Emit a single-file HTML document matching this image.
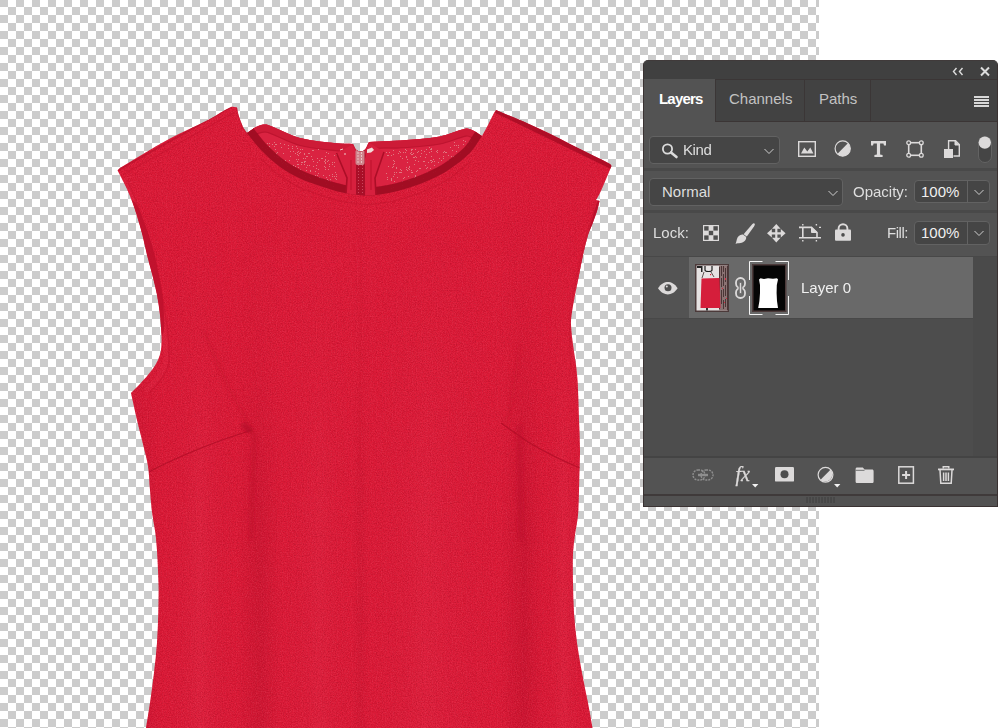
<!DOCTYPE html>
<html><head><meta charset="utf-8">
<style>
*{box-sizing:border-box;margin:0;padding:0}
html,body{width:1001px;height:728px;overflow:hidden;background:#fff}
body{position:relative;font-family:"Liberation Sans",sans-serif;font-size:15px;color:#dedede}
#canvas{position:absolute;left:0;top:0;width:819px;height:728px;
 background-color:#fff;
 background-image:conic-gradient(#ccc 25%,#fff 0 50%,#ccc 0 75%,#fff 0);
 background-size:16px 16px;background-position:8px -1px}
#dress{position:absolute;left:0;top:0}
#panel{position:absolute;left:643px;top:60px;width:355px;height:447px;background:#535353;
 border-radius:5px 5px 0 0;overflow:hidden;border:1px solid #3a3232;border-top-color:#403a3a}
#ov{position:absolute;left:0;top:0;width:1001px;height:728px}
#ov>*{position:absolute}
.bg{position:absolute}
.tab{border:1px solid #3b3636;border-bottom:none;background:#424242}
.box{background:#454545;border:1px solid #626262;border-radius:4px}
.t{white-space:nowrap;line-height:18px;height:18px}
.dim{color:#c2c2c2}
svg{overflow:visible}
</style></head><body>
<div id="canvas"></div>
<svg id="dress" width="819" height="728" viewBox="0 0 819 728">
<defs>
 <clipPath id="cs"><path d="M117.6,170.5 C118.4,169.7 119.0,168.6 120.0,168.0 C136.5,157.9 153.0,147.8 170.0,138.5 C183.0,131.4 196.8,125.8 210.0,119.0 C217.2,115.3 223.6,110.2 231.0,107.0 C232.8,106.2 235.0,107.3 237.0,107.4 C237.5,109.9 237.7,112.5 238.5,115.0 C239.8,119.1 241.2,123.1 243.0,127.0 C244.0,129.2 245.7,131.0 247.0,133.0 C250.0,131.0 252.8,128.7 256.0,127.0 C257.9,126.0 259.9,125.2 262.0,124.8 C264.0,124.5 266.1,124.3 268.0,125.0 C278.9,128.8 288.9,135.1 300.0,138.0 C312.7,141.3 326.0,142.1 339.0,143.6 C343.6,144.1 348.3,143.9 353.0,144.0 C354.3,146.2 354.8,149.2 357.0,150.5 C359.0,151.7 362.1,151.8 364.0,150.5 C366.7,148.6 367.3,144.8 369.0,142.0 C379.3,141.5 389.7,141.3 400.0,140.5 C413.4,139.5 426.8,138.9 440.0,136.5 C448.9,134.9 457.1,130.4 466.0,128.6 C468.0,128.2 470.1,129.1 472.0,130.0 C475.5,131.6 478.7,134.0 482.0,136.0 C484.0,132.3 486.1,128.7 488.0,125.0 C490.1,121.0 491.9,116.9 494.0,113.0 C494.6,111.9 495.3,111.0 496.0,110.0 C510.7,116.3 525.5,122.3 540.0,129.0 C553.5,135.3 566.7,142.3 580.0,149.0 C590.0,154.0 600.2,158.7 610.0,164.0 C610.7,164.4 611.0,165.3 611.5,166.0 C609.8,170.0 608.2,174.0 606.5,178.0 C604.2,183.4 602.0,188.7 599.5,194.0 C598.5,196.1 597.2,198.0 596.0,200.0 C597.2,200.3 598.3,200.7 599.5,201.0 C598.7,204.3 598.0,207.7 597.0,211.0 C595.5,215.7 593.7,220.4 592.0,225.0 C590.7,228.4 589.0,231.6 588.0,235.0 C586.0,241.6 584.5,248.3 583.0,255.0 C581.5,261.6 580.3,268.3 579.0,275.0 C577.7,281.7 576.3,288.3 575.0,295.0 C573.8,301.7 572.4,308.3 571.5,315.0 C571.1,318.3 570.8,321.7 571.0,325.0 C571.3,331.7 572.2,338.4 573.0,345.0 C573.8,351.7 575.1,358.3 576.0,365.0 C576.6,370.0 577.1,375.0 577.5,380.0 C577.8,383.3 577.9,386.7 578.0,390.0 C578.4,400.0 578.7,410.0 579.0,420.0 C579.3,430.0 579.9,440.0 580.0,450.0 C580.1,456.7 579.7,463.3 579.5,470.0 C579.3,476.7 579.2,483.3 579.0,490.0 C578.7,498.3 578.7,506.7 578.0,515.0 C577.4,521.7 575.9,528.3 575.0,535.0 C574.2,541.0 573.3,547.0 573.0,553.0 C572.6,563.0 572.8,573.0 573.0,583.0 C573.2,593.0 573.3,603.0 574.0,613.0 C574.7,623.0 575.7,633.0 577.0,643.0 C578.3,653.0 580.2,663.0 582.0,673.0 C583.8,683.0 586.1,693.0 588.0,703.0 C589.6,711.3 591.0,719.7 592.5,728.0 C443.7,728.0 294.8,728.0 146.0,728.0 C147.3,719.7 148.8,711.4 150.0,703.0 C151.5,693.0 152.8,683.0 154.0,673.0 C155.2,663.0 156.3,653.0 157.0,643.0 C157.7,633.0 158.0,623.0 158.3,613.0 C158.5,603.0 158.8,593.0 158.5,583.0 C158.0,568.0 157.4,553.0 156.0,538.0 C155.2,529.3 153.1,520.7 152.0,512.0 C151.1,504.7 150.6,497.3 150.0,490.0 C149.3,482.0 149.2,473.9 148.0,466.0 C146.9,458.6 144.7,451.3 143.0,444.0 C141.1,436.0 138.9,428.0 137.0,420.0 C135.6,414.0 134.3,408.0 133.0,402.0 C132.3,399.0 131.7,396.0 131.0,393.0 C134.0,390.0 137.1,387.1 140.0,384.0 C144.1,379.5 148.3,374.9 152.0,370.0 C154.3,366.9 156.4,363.5 158.0,360.0 C159.4,356.8 160.5,353.4 161.0,350.0 C161.7,345.0 161.6,340.0 161.5,335.0 C161.3,328.3 160.7,321.6 160.0,315.0 C159.2,308.3 158.3,301.6 157.0,295.0 C155.7,288.3 154.0,281.6 152.3,275.0 C150.6,268.3 148.7,261.7 147.0,255.0 C145.4,248.4 144.1,241.6 142.4,235.0 C140.8,228.6 138.9,222.3 137.0,216.0 C135.5,211.0 133.8,205.9 132.0,201.0 C130.5,196.9 128.8,192.9 127.0,189.0 C125.5,185.6 123.7,182.3 122.0,179.0 C120.6,176.2 119.1,173.3 117.6,170.5 Z"/></clipPath>
 <clipPath id="cc"><path d="M247.0,133.0 C250.0,131.0 252.8,128.7 256.0,127.0 C257.9,126.0 259.9,125.2 262.0,124.8 C264.0,124.5 266.1,124.3 268.0,125.0 C278.9,128.8 288.9,135.1 300.0,138.0 C312.7,141.3 326.0,142.1 339.0,143.6 C343.6,144.1 348.3,143.9 353.0,144.0 C354.3,146.2 354.8,149.2 357.0,150.5 C359.0,151.7 362.1,151.8 364.0,150.5 C366.7,148.6 367.3,144.8 369.0,142.0 C379.3,141.5 389.7,141.3 400.0,140.5 C413.4,139.5 426.8,138.9 440.0,136.5 C448.9,134.9 457.1,130.4 466.0,128.6 C468.0,128.2 470.1,129.1 472.0,130.0 C475.5,131.6 478.7,134.0 482.0,136.0 C478.0,141.7 474.8,148.0 470.0,153.0 C464.1,159.1 456.9,164.0 450.0,169.0 C446.9,171.3 443.5,173.3 440.0,175.0 C433.5,178.3 426.8,181.4 420.0,184.0 C412.8,186.7 405.4,189.0 398.0,191.0 C392.1,192.6 386.1,193.7 380.0,194.5 C375.0,195.2 370.0,195.8 365.0,195.5 C357.3,195.1 349.6,194.1 342.0,192.5 C334.5,190.9 327.3,188.4 320.0,186.0 C313.2,183.7 306.4,181.6 300.0,178.5 C293.1,175.2 286.2,171.6 280.0,167.0 C272.8,161.7 266.2,155.4 260.0,149.0 C255.2,144.1 251.3,138.3 247.0,133.0 Z"/></clipPath>
 <linearGradient id="folds" gradientUnits="userSpaceOnUse" x1="140" x2="600" y1="0" y2="0">
  <stop offset="0" stop-color="#b80f2a" stop-opacity=".35"/>
  <stop offset=".05" stop-color="#b80f2a" stop-opacity="0"/>
  <stop offset=".13" stop-color="#f04a66" stop-opacity=".16"/>
  <stop offset=".21" stop-color="#b80f2a" stop-opacity="0"/>
  <stop offset=".26" stop-color="#b80f2a" stop-opacity=".38"/>
  <stop offset=".31" stop-color="#b80f2a" stop-opacity="0"/>
  <stop offset=".39" stop-color="#f04a66" stop-opacity=".12"/>
  <stop offset=".46" stop-color="#b80f2a" stop-opacity="0"/>
  <stop offset=".478" stop-color="#b80f2a" stop-opacity=".22"/>
  <stop offset=".5" stop-color="#b80f2a" stop-opacity="0"/>
  <stop offset=".62" stop-color="#f04a66" stop-opacity=".12"/>
  <stop offset=".78" stop-color="#b80f2a" stop-opacity="0"/>
  <stop offset=".835" stop-color="#b80f2a" stop-opacity=".42"/>
  <stop offset=".88" stop-color="#b80f2a" stop-opacity="0"/>
  <stop offset=".92" stop-color="#f04a66" stop-opacity=".16"/>
  <stop offset=".97" stop-color="#b80f2a" stop-opacity="0"/>
  <stop offset="1" stop-color="#b80f2a" stop-opacity=".3"/>
 </linearGradient>
 <linearGradient id="vfade" x1="0" x2="0" y1="0" y2="1">
  <stop offset="0" stop-color="#000"/><stop offset=".3" stop-color="#444"/><stop offset=".62" stop-color="#fff"/><stop offset="1" stop-color="#fff"/>
 </linearGradient>
 <mask id="mf" maskUnits="userSpaceOnUse" x="100" y="200" width="560" height="528"><rect x="100" y="200" width="560" height="528" fill="url(#vfade)"/></mask>
 <filter id="grain" filterUnits="userSpaceOnUse" x="100" y="100" width="530" height="628" color-interpolation-filters="sRGB">
  <feTurbulence type="fractalNoise" baseFrequency="0.85" numOctaves="2" seed="5" result="n"/>
  <feColorMatrix in="n" type="matrix" values="0 0 0 0 0.62  0 0 0 0 0.03  0 0 0 0 0.12  0 0 0 1.6 -0.62"/>
 </filter>
 <filter id="grain2" filterUnits="userSpaceOnUse" x="100" y="100" width="530" height="628" color-interpolation-filters="sRGB">
  <feTurbulence type="fractalNoise" baseFrequency="0.8" numOctaves="2" seed="23" result="n"/>
  <feColorMatrix in="n" type="matrix" values="0 0 0 0 0.95  0 0 0 0 0.35  0 0 0 0 0.45  0 0 0 1.4 -0.6"/>
 </filter>
 <filter id="bl2" filterUnits="userSpaceOnUse" x="0" y="0" width="819" height="728"><feGaussianBlur stdDeviation="1.6"/></filter>
 <filter id="bl1" filterUnits="userSpaceOnUse" x="0" y="0" width="819" height="728"><feGaussianBlur stdDeviation="0.7"/></filter>
 <filter id="bl3" filterUnits="userSpaceOnUse" x="0" y="0" width="819" height="728"><feGaussianBlur stdDeviation="3"/></filter>
</defs>
<path d="M117.6,170.5 C118.4,169.7 119.0,168.6 120.0,168.0 C136.5,157.9 153.0,147.8 170.0,138.5 C183.0,131.4 196.8,125.8 210.0,119.0 C217.2,115.3 223.6,110.2 231.0,107.0 C232.8,106.2 235.0,107.3 237.0,107.4 C237.5,109.9 237.7,112.5 238.5,115.0 C239.8,119.1 241.2,123.1 243.0,127.0 C244.0,129.2 245.7,131.0 247.0,133.0 C250.0,131.0 252.8,128.7 256.0,127.0 C257.9,126.0 259.9,125.2 262.0,124.8 C264.0,124.5 266.1,124.3 268.0,125.0 C278.9,128.8 288.9,135.1 300.0,138.0 C312.7,141.3 326.0,142.1 339.0,143.6 C343.6,144.1 348.3,143.9 353.0,144.0 C354.3,146.2 354.8,149.2 357.0,150.5 C359.0,151.7 362.1,151.8 364.0,150.5 C366.7,148.6 367.3,144.8 369.0,142.0 C379.3,141.5 389.7,141.3 400.0,140.5 C413.4,139.5 426.8,138.9 440.0,136.5 C448.9,134.9 457.1,130.4 466.0,128.6 C468.0,128.2 470.1,129.1 472.0,130.0 C475.5,131.6 478.7,134.0 482.0,136.0 C484.0,132.3 486.1,128.7 488.0,125.0 C490.1,121.0 491.9,116.9 494.0,113.0 C494.6,111.9 495.3,111.0 496.0,110.0 C510.7,116.3 525.5,122.3 540.0,129.0 C553.5,135.3 566.7,142.3 580.0,149.0 C590.0,154.0 600.2,158.7 610.0,164.0 C610.7,164.4 611.0,165.3 611.5,166.0 C609.8,170.0 608.2,174.0 606.5,178.0 C604.2,183.4 602.0,188.7 599.5,194.0 C598.5,196.1 597.2,198.0 596.0,200.0 C597.2,200.3 598.3,200.7 599.5,201.0 C598.7,204.3 598.0,207.7 597.0,211.0 C595.5,215.7 593.7,220.4 592.0,225.0 C590.7,228.4 589.0,231.6 588.0,235.0 C586.0,241.6 584.5,248.3 583.0,255.0 C581.5,261.6 580.3,268.3 579.0,275.0 C577.7,281.7 576.3,288.3 575.0,295.0 C573.8,301.7 572.4,308.3 571.5,315.0 C571.1,318.3 570.8,321.7 571.0,325.0 C571.3,331.7 572.2,338.4 573.0,345.0 C573.8,351.7 575.1,358.3 576.0,365.0 C576.6,370.0 577.1,375.0 577.5,380.0 C577.8,383.3 577.9,386.7 578.0,390.0 C578.4,400.0 578.7,410.0 579.0,420.0 C579.3,430.0 579.9,440.0 580.0,450.0 C580.1,456.7 579.7,463.3 579.5,470.0 C579.3,476.7 579.2,483.3 579.0,490.0 C578.7,498.3 578.7,506.7 578.0,515.0 C577.4,521.7 575.9,528.3 575.0,535.0 C574.2,541.0 573.3,547.0 573.0,553.0 C572.6,563.0 572.8,573.0 573.0,583.0 C573.2,593.0 573.3,603.0 574.0,613.0 C574.7,623.0 575.7,633.0 577.0,643.0 C578.3,653.0 580.2,663.0 582.0,673.0 C583.8,683.0 586.1,693.0 588.0,703.0 C589.6,711.3 591.0,719.7 592.5,728.0 C443.7,728.0 294.8,728.0 146.0,728.0 C147.3,719.7 148.8,711.4 150.0,703.0 C151.5,693.0 152.8,683.0 154.0,673.0 C155.2,663.0 156.3,653.0 157.0,643.0 C157.7,633.0 158.0,623.0 158.3,613.0 C158.5,603.0 158.8,593.0 158.5,583.0 C158.0,568.0 157.4,553.0 156.0,538.0 C155.2,529.3 153.1,520.7 152.0,512.0 C151.1,504.7 150.6,497.3 150.0,490.0 C149.3,482.0 149.2,473.9 148.0,466.0 C146.9,458.6 144.7,451.3 143.0,444.0 C141.1,436.0 138.9,428.0 137.0,420.0 C135.6,414.0 134.3,408.0 133.0,402.0 C132.3,399.0 131.7,396.0 131.0,393.0 C134.0,390.0 137.1,387.1 140.0,384.0 C144.1,379.5 148.3,374.9 152.0,370.0 C154.3,366.9 156.4,363.5 158.0,360.0 C159.4,356.8 160.5,353.4 161.0,350.0 C161.7,345.0 161.6,340.0 161.5,335.0 C161.3,328.3 160.7,321.6 160.0,315.0 C159.2,308.3 158.3,301.6 157.0,295.0 C155.7,288.3 154.0,281.6 152.3,275.0 C150.6,268.3 148.7,261.7 147.0,255.0 C145.4,248.4 144.1,241.6 142.4,235.0 C140.8,228.6 138.9,222.3 137.0,216.0 C135.5,211.0 133.8,205.9 132.0,201.0 C130.5,196.9 128.8,192.9 127.0,189.0 C125.5,185.6 123.7,182.3 122.0,179.0 C120.6,176.2 119.1,173.3 117.6,170.5 Z" fill="#dd1b38"/>
<g clip-path="url(#cs)">
 <g mask="url(#mf)"><rect x="100" y="200" width="560" height="528" fill="url(#folds)" transform="skewX(0)"/></g>
 <rect x="100" y="100" width="530" height="628" filter="url(#grain)" opacity=".55"/>
 <rect x="100" y="100" width="530" height="628" filter="url(#grain2)" opacity=".45"/>
 <!-- armhole binding lighter strips -->
 <path d="M124,178 C138,208 150,245 158,285 C163,312 167,340 166,360 C165,370 157,380 146,391" fill="none" stroke="#e5324f" stroke-width="5" opacity=".22"/>
 <path d="M599,198 C591,225 583,258 578,290 C574,315 573,340 575,362" fill="none" stroke="#e5324f" stroke-width="4" opacity=".18"/>
 <!-- centre seam upper -->
 <path d="M361,200 L359.5,470" stroke="#c3132e" stroke-width="1.2" opacity=".14" fill="none"/>
 <!-- darts -->
 <g fill="none" stroke="#b30e28" stroke-width="1.3" opacity=".85" filter="url(#bl1)">
  <path d="M149,472 C165,463 205,445 240,434 L252,430"/>
  <path d="M501,423 L528,442 C545,452 565,462 580,468"/>
 </g>
 <g fill="none" stroke="#bd112c" opacity=".5" filter="url(#bl2)">
  <path d="M203,330 C220,370 240,410 254,433" stroke-width="3" opacity=".55"/>
  <path d="M519,345 C516,380 512,410 504,424" stroke-width="3" opacity=".5"/>
  <path d="M254,433 C254,470 252,500 251,540" stroke-width="5" opacity=".8"/>
  <path d="M519,425 C520,460 520,500 521,540" stroke-width="6" opacity=".9"/>
 </g>
 <ellipse cx="247" cy="428" rx="7" ry="3.5" fill="#b50f29" opacity=".75" filter="url(#bl2)" transform="rotate(38 247 428)"/>
 <!-- armhole inner (back) -->
 <path d="M131.0,199.0 C133.0,204.7 135.2,210.3 137.0,216.0 C139.0,222.3 140.8,228.6 142.4,235.0 C144.1,241.6 145.4,248.4 147.0,255.0 C148.7,261.7 150.6,268.3 152.3,275.0 C154.0,281.6 155.7,288.3 157.0,295.0 C158.3,301.6 159.2,308.3 160.0,315.0 C160.7,321.6 159.8,328.5 161.5,335.0 C162.0,336.8 163.9,331.9 164.0,330.0 C164.4,320.0 164.0,310.0 163.0,300.0 C162.0,289.9 160.0,279.9 158.0,270.0 C156.3,261.6 154.4,253.2 152.0,245.0 C149.7,237.2 146.9,229.6 144.0,222.0 C141.8,216.3 140.0,210.3 137.0,205.0 C135.6,202.5 133.0,201.0 131.0,199.0 Z" fill="#bd112c" opacity=".85"/>
 <path d="M127,180 C140,208 152,245 160,285 C165,312 170,340 169,362 C168,372 160,382 150,392" fill="none" stroke="#c3132e" stroke-width="1.2" opacity=".55"/>
 <path d="M600,200 C596,212 589,236 583,262 C579,285 575,305 574.5,322" fill="none" stroke="#b30e28" stroke-width="4" opacity=".8"/>
 <path d="M574.5,322 C575,340 578,360 580,385 L582,470 L579,540" fill="none" stroke="#c3132e" stroke-width="3" opacity=".45"/>
 <path d="M594,210 C586,235 578,265 573,295 C569,320 569,345 571,370" fill="none" stroke="#c3132e" stroke-width="1.2" opacity=".4"/>
 <!-- shoulder edges -->
 <path d="M123,174.5 L234,112.5" stroke="#c3132e" stroke-width="1.2" opacity=".55" fill="none"/>
 <path d="M117.6,170.5 L231,107" stroke="#b30e28" stroke-width="2" opacity=".55" fill="none"/>
 <path d="M496,110.5 L611.5,166.5" stroke="#a50b23" stroke-width="5" opacity=".8" fill="none"/>
 <path d="M237,107.4 C238,117 243,127 248,134" stroke="#b30e28" stroke-width="1.5" opacity=".5" fill="none"/>
</g>
<!-- collar interior -->
<path d="M247.0,133.0 C250.0,131.0 252.8,128.7 256.0,127.0 C257.9,126.0 259.9,125.2 262.0,124.8 C264.0,124.5 266.1,124.3 268.0,125.0 C278.9,128.8 288.9,135.1 300.0,138.0 C312.7,141.3 326.0,142.1 339.0,143.6 C343.6,144.1 348.3,143.9 353.0,144.0 C354.3,146.2 354.8,149.2 357.0,150.5 C359.0,151.7 362.1,151.8 364.0,150.5 C366.7,148.6 367.3,144.8 369.0,142.0 C379.3,141.5 389.7,141.3 400.0,140.5 C413.4,139.5 426.8,138.9 440.0,136.5 C448.9,134.9 457.1,130.4 466.0,128.6 C468.0,128.2 470.1,129.1 472.0,130.0 C475.5,131.6 478.7,134.0 482.0,136.0 C478.0,141.7 474.8,148.0 470.0,153.0 C464.1,159.1 456.9,164.0 450.0,169.0 C446.9,171.3 443.5,173.3 440.0,175.0 C433.5,178.3 426.8,181.4 420.0,184.0 C412.8,186.7 405.4,189.0 398.0,191.0 C392.1,192.6 386.1,193.7 380.0,194.5 C375.0,195.2 370.0,195.8 365.0,195.5 C357.3,195.1 349.6,194.1 342.0,192.5 C334.5,190.9 327.3,188.4 320.0,186.0 C313.2,183.7 306.4,181.6 300.0,178.5 C293.1,175.2 286.2,171.6 280.0,167.0 C272.8,161.7 266.2,155.4 260.0,149.0 C255.2,144.1 251.3,138.3 247.0,133.0 Z" fill="#da2341"/>
<g clip-path="url(#cc)">
 <path d="M247.0,133.0 C250.0,131.0 252.8,128.7 256.0,127.0 C257.9,126.0 259.9,125.2 262.0,124.8 C264.0,124.5 266.1,124.3 268.0,125.0 C278.9,128.8 288.9,135.1 300.0,138.0 C312.7,141.3 326.0,142.1 339.0,143.6 C343.6,144.1 348.6,142.3 353.0,144.0 C355.4,144.9 354.8,149.2 357.0,150.5 C359.0,151.7 362.1,151.8 364.0,150.5 C366.7,148.6 365.8,142.9 369.0,142.0 C379.0,139.2 389.7,141.3 400.0,140.5 C413.4,139.5 426.8,138.9 440.0,136.5 C448.9,134.9 457.1,130.4 466.0,128.6 C468.0,128.2 470.1,129.1 472.0,130.0 C475.5,131.6 478.7,134.0 482.0,136.0" fill="none" stroke="#c41530" stroke-width="15" opacity=".6"/>
 <path d="M247.0,140.5 C250.0,138.5 252.8,136.2 256.0,134.5 C257.9,133.5 259.9,132.7 262.0,132.3 C264.0,132.0 266.1,131.8 268.0,132.5 C278.9,136.3 288.9,142.6 300.0,145.5 C312.7,148.8 326.0,149.6 339.0,151.1 C343.6,151.6 348.6,149.8 353.0,151.5 C355.4,152.4 354.8,156.7 357.0,158.0 C359.0,159.2 362.1,159.3 364.0,158.0 C366.7,156.1 365.8,150.4 369.0,149.5 C379.0,146.7 389.7,148.8 400.0,148.0 C413.4,147.0 426.8,146.4 440.0,144.0 C448.9,142.4 457.1,137.9 466.0,136.1 C468.0,135.7 470.1,136.6 472.0,137.5 C475.5,139.1 478.7,141.5 482.0,143.5" fill="none" stroke="#b20f29" stroke-width="1.2" opacity=".6"/>
 <g fill="#e3a3a0" opacity=".65"><rect x="298" y="167" width="1" height="1"/><rect x="394" y="181" width="1" height="1"/><rect x="278" y="156" width="1" height="1"/><rect x="399" y="172" width="1" height="1"/><rect x="299" y="153" width="1" height="1"/><rect x="326" y="152" width="1" height="1"/><rect x="424" y="161" width="1" height="1"/><rect x="441" y="160" width="1" height="1"/><rect x="426" y="154" width="1" height="1"/><rect x="277" y="157" width="1" height="1"/><rect x="283" y="153" width="1" height="1"/><rect x="280" y="143" width="1" height="1"/><rect x="430" y="149" width="1" height="1"/><rect x="283" y="162" width="1" height="1"/><rect x="304" y="154" width="1" height="1"/><rect x="304" y="161" width="1" height="1"/><rect x="304" y="153" width="1" height="1"/><rect x="425" y="157" width="1" height="1"/><rect x="310" y="171" width="1" height="1"/><rect x="297" y="148" width="1" height="1"/><rect x="312" y="150" width="1" height="1"/><rect x="309" y="177" width="1" height="1"/><rect x="387" y="155" width="1" height="1"/><rect x="273" y="152" width="1" height="1"/><rect x="391" y="155" width="1" height="1"/><rect x="456" y="151" width="1" height="1"/><rect x="296" y="159" width="1" height="1"/><rect x="407" y="170" width="1" height="1"/><rect x="417" y="177" width="1" height="1"/><rect x="334" y="176" width="1" height="1"/><rect x="393" y="160" width="1" height="1"/><rect x="415" y="160" width="1" height="1"/><rect x="417" y="170" width="1" height="1"/><rect x="409" y="166" width="1" height="1"/><rect x="391" y="188" width="1" height="1"/><rect x="323" y="175" width="1" height="1"/><rect x="302" y="149" width="1" height="1"/><rect x="329" y="175" width="1" height="1"/><rect x="301" y="162" width="1" height="1"/><rect x="448" y="160" width="1" height="1"/><rect x="287" y="166" width="1" height="1"/><rect x="318" y="149" width="1" height="1"/><rect x="304" y="162" width="1" height="1"/><rect x="393" y="166" width="1" height="1"/><rect x="326" y="184" width="1" height="1"/><rect x="274" y="142" width="1" height="1"/><rect x="411" y="170" width="1" height="1"/><rect x="325" y="181" width="1" height="1"/><rect x="262" y="147" width="1" height="1"/><rect x="437" y="152" width="1" height="1"/><rect x="394" y="163" width="1" height="1"/><rect x="394" y="174" width="1" height="1"/><rect x="406" y="150" width="1" height="1"/><rect x="412" y="149" width="1" height="1"/><rect x="317" y="158" width="1" height="1"/><rect x="409" y="167" width="1" height="1"/><rect x="391" y="179" width="1" height="1"/><rect x="454" y="145" width="1" height="1"/><rect x="286" y="164" width="1" height="1"/><rect x="393" y="187" width="1" height="1"/><rect x="399" y="151" width="1" height="1"/><rect x="397" y="177" width="1" height="1"/><rect x="443" y="158" width="1" height="1"/><rect x="431" y="149" width="1" height="1"/><rect x="330" y="181" width="1" height="1"/><rect x="288" y="148" width="1" height="1"/><rect x="463" y="144" width="1" height="1"/><rect x="306" y="167" width="1" height="1"/><rect x="321" y="178" width="1" height="1"/><rect x="396" y="167" width="1" height="1"/><rect x="325" y="160" width="1" height="1"/><rect x="316" y="165" width="1" height="1"/><rect x="285" y="163" width="1" height="1"/><rect x="299" y="172" width="1" height="1"/><rect x="458" y="147" width="1" height="1"/><rect x="300" y="152" width="1" height="1"/><rect x="406" y="157" width="1" height="1"/><rect x="335" y="172" width="1" height="1"/><rect x="312" y="150" width="1" height="1"/><rect x="302" y="173" width="1" height="1"/><rect x="396" y="168" width="1" height="1"/><rect x="443" y="152" width="1" height="1"/><rect x="453" y="156" width="1" height="1"/><rect x="450" y="147" width="1" height="1"/><rect x="310" y="178" width="1" height="1"/><rect x="438" y="162" width="1" height="1"/><rect x="429" y="147" width="1" height="1"/><rect x="467" y="146" width="1" height="1"/><rect x="298" y="151" width="1" height="1"/><rect x="458" y="145" width="1" height="1"/><rect x="329" y="164" width="1" height="1"/><rect x="297" y="164" width="1" height="1"/><rect x="418" y="161" width="1" height="1"/><rect x="300" y="149" width="1" height="1"/><rect x="394" y="161" width="1" height="1"/><rect x="388" y="166" width="1" height="1"/><rect x="434" y="161" width="1" height="1"/><rect x="408" y="180" width="1" height="1"/><rect x="423" y="161" width="1" height="1"/><rect x="332" y="164" width="1" height="1"/><rect x="396" y="172" width="1" height="1"/><rect x="402" y="158" width="1" height="1"/><rect x="401" y="170" width="1" height="1"/><rect x="409" y="180" width="1" height="1"/><rect x="470" y="141" width="1" height="1"/><rect x="391" y="178" width="1" height="1"/><rect x="313" y="161" width="1" height="1"/><rect x="269" y="150" width="1" height="1"/><rect x="387" y="179" width="1" height="1"/><rect x="293" y="165" width="1" height="1"/><rect x="295" y="166" width="1" height="1"/><rect x="400" y="169" width="1" height="1"/><rect x="319" y="177" width="1" height="1"/><rect x="414" y="164" width="1" height="1"/><rect x="393" y="164" width="1" height="1"/><rect x="426" y="168" width="1" height="1"/><rect x="417" y="152" width="1" height="1"/><rect x="427" y="172" width="1" height="1"/><rect x="336" y="154" width="1" height="1"/><rect x="406" y="169" width="1" height="1"/><rect x="386" y="173" width="1" height="1"/><rect x="421" y="150" width="1" height="1"/><rect x="267" y="143" width="1" height="1"/><rect x="317" y="162" width="1" height="1"/><rect x="303" y="158" width="1" height="1"/><rect x="274" y="146" width="1" height="1"/><rect x="433" y="172" width="1" height="1"/><rect x="424" y="151" width="1" height="1"/><rect x="433" y="159" width="1" height="1"/><rect x="328" y="169" width="1" height="1"/><rect x="275" y="144" width="1" height="1"/><rect x="406" y="156" width="1" height="1"/><rect x="304" y="174" width="1" height="1"/><rect x="276" y="156" width="1" height="1"/><rect x="415" y="176" width="1" height="1"/><rect x="335" y="178" width="1" height="1"/><rect x="411" y="170" width="1" height="1"/><rect x="431" y="156" width="1" height="1"/><rect x="327" y="161" width="1" height="1"/><rect x="312" y="159" width="1" height="1"/><rect x="300" y="169" width="1" height="1"/><rect x="430" y="168" width="1" height="1"/><rect x="439" y="169" width="1" height="1"/><rect x="448" y="155" width="1" height="1"/><rect x="276" y="144" width="1" height="1"/><rect x="398" y="153" width="1" height="1"/><rect x="414" y="177" width="1" height="1"/><rect x="431" y="162" width="1" height="1"/><rect x="302" y="162" width="1" height="1"/><rect x="426" y="149" width="1" height="1"/><rect x="266" y="146" width="1" height="1"/><rect x="298" y="151" width="1" height="1"/><rect x="309" y="177" width="1" height="1"/><rect x="386" y="152" width="1" height="1"/><rect x="298" y="155" width="1" height="1"/><rect x="325" y="169" width="1" height="1"/><rect x="434" y="165" width="1" height="1"/><rect x="431" y="160" width="1" height="1"/><rect x="400" y="152" width="1" height="1"/><rect x="412" y="172" width="1" height="1"/><rect x="292" y="148" width="1" height="1"/><rect x="328" y="153" width="1" height="1"/><rect x="316" y="168" width="1" height="1"/><rect x="276" y="154" width="1" height="1"/><rect x="443" y="156" width="1" height="1"/><rect x="428" y="162" width="1" height="1"/><rect x="456" y="145" width="1" height="1"/><rect x="436" y="151" width="1" height="1"/><rect x="325" y="156" width="1" height="1"/><rect x="274" y="156" width="1" height="1"/><rect x="336" y="176" width="1" height="1"/><rect x="281" y="161" width="1" height="1"/><rect x="411" y="152" width="1" height="1"/><rect x="431" y="151" width="1" height="1"/><rect x="391" y="155" width="1" height="1"/><rect x="322" y="158" width="1" height="1"/><rect x="313" y="150" width="1" height="1"/><rect x="416" y="157" width="1" height="1"/><rect x="414" y="157" width="1" height="1"/><rect x="288" y="145" width="1" height="1"/><rect x="404" y="177" width="1" height="1"/><rect x="297" y="161" width="1" height="1"/><rect x="277" y="152" width="1" height="1"/><rect x="292" y="146" width="1" height="1"/><rect x="401" y="172" width="1" height="1"/><rect x="332" y="174" width="1" height="1"/><rect x="281" y="160" width="1" height="1"/><rect x="334" y="166" width="1" height="1"/><rect x="393" y="150" width="1" height="1"/><rect x="276" y="153" width="1" height="1"/><rect x="435" y="171" width="1" height="1"/><rect x="310" y="170" width="1" height="1"/><rect x="437" y="150" width="1" height="1"/><rect x="265" y="149" width="1" height="1"/><rect x="400" y="156" width="1" height="1"/><rect x="403" y="178" width="1" height="1"/><rect x="301" y="164" width="1" height="1"/><rect x="289" y="160" width="1" height="1"/><rect x="393" y="176" width="1" height="1"/><rect x="416" y="171" width="1" height="1"/><rect x="420" y="156" width="1" height="1"/><rect x="285" y="163" width="1" height="1"/><rect x="324" y="161" width="1" height="1"/><rect x="402" y="185" width="1" height="1"/><rect x="463" y="140" width="1" height="1"/><rect x="311" y="156" width="1" height="1"/><rect x="324" y="166" width="1" height="1"/><rect x="452" y="150" width="1" height="1"/><rect x="439" y="158" width="1" height="1"/><rect x="302" y="173" width="1" height="1"/><rect x="269" y="146" width="1" height="1"/><rect x="415" y="156" width="1" height="1"/><rect x="306" y="156" width="1" height="1"/><rect x="411" y="150" width="1" height="1"/><rect x="297" y="152" width="1" height="1"/><rect x="402" y="181" width="1" height="1"/><rect x="307" y="156" width="1" height="1"/><rect x="318" y="173" width="1" height="1"/><rect x="388" y="155" width="1" height="1"/><rect x="277" y="155" width="1" height="1"/><rect x="421" y="153" width="1" height="1"/><rect x="318" y="169" width="1" height="1"/><rect x="471" y="142" width="1" height="1"/><rect x="336" y="174" width="1" height="1"/><rect x="427" y="167" width="1" height="1"/><rect x="406" y="167" width="1" height="1"/><rect x="464" y="149" width="1" height="1"/><rect x="426" y="149" width="1" height="1"/><rect x="389" y="152" width="1" height="1"/><rect x="309" y="165" width="1" height="1"/><rect x="306" y="170" width="1" height="1"/><rect x="387" y="177" width="1" height="1"/><rect x="297" y="148" width="1" height="1"/><rect x="429" y="152" width="1" height="1"/><rect x="290" y="156" width="1" height="1"/><rect x="392" y="167" width="1" height="1"/><rect x="315" y="171" width="1" height="1"/><rect x="295" y="153" width="1" height="1"/><rect x="468" y="142" width="1" height="1"/><rect x="450" y="147" width="1" height="1"/><rect x="308" y="153" width="1" height="1"/><rect x="332" y="176" width="1" height="1"/><rect x="305" y="158" width="1" height="1"/><rect x="298" y="169" width="1" height="1"/><rect x="293" y="151" width="1" height="1"/><rect x="304" y="164" width="1" height="1"/><rect x="325" y="163" width="1" height="1"/><rect x="444" y="151" width="1" height="1"/><rect x="407" y="159" width="1" height="1"/><rect x="297" y="154" width="1" height="1"/><rect x="412" y="154" width="1" height="1"/><rect x="423" y="178" width="1" height="1"/><rect x="328" y="160" width="1" height="1"/><rect x="328" y="180" width="1" height="1"/><rect x="267" y="148" width="1" height="1"/><rect x="325" y="162" width="1" height="1"/><rect x="411" y="154" width="1" height="1"/><rect x="415" y="175" width="1" height="1"/><rect x="290" y="151" width="1" height="1"/><rect x="319" y="177" width="1" height="1"/><rect x="445" y="152" width="1" height="1"/><rect x="321" y="158" width="1" height="1"/><rect x="305" y="176" width="1" height="1"/><rect x="446" y="152" width="1" height="1"/><rect x="329" y="166" width="1" height="1"/><rect x="332" y="162" width="1" height="1"/><rect x="409" y="169" width="1" height="1"/><rect x="328" y="153" width="1" height="1"/><rect x="315" y="175" width="1" height="1"/><rect x="298" y="164" width="1" height="1"/><rect x="394" y="172" width="1" height="1"/><rect x="448" y="160" width="1" height="1"/><rect x="454" y="142" width="1" height="1"/><rect x="287" y="166" width="1" height="1"/><rect x="325" y="159" width="1" height="1"/><rect x="300" y="152" width="1" height="1"/><rect x="405" y="152" width="1" height="1"/><rect x="333" y="186" width="1" height="1"/><rect x="326" y="177" width="1" height="1"/><rect x="408" y="176" width="1" height="1"/><rect x="420" y="168" width="1" height="1"/><rect x="309" y="153" width="1" height="1"/><rect x="272" y="144" width="1" height="1"/><rect x="282" y="163" width="1" height="1"/><rect x="425" y="165" width="1" height="1"/><rect x="313" y="166" width="1" height="1"/><rect x="430" y="160" width="1" height="1"/><rect x="413" y="153" width="1" height="1"/><rect x="413" y="157" width="1" height="1"/><rect x="330" y="179" width="1" height="1"/><rect x="411" y="172" width="1" height="1"/><rect x="285" y="160" width="1" height="1"/><rect x="403" y="152" width="1" height="1"/><rect x="468" y="147" width="1" height="1"/><rect x="407" y="162" width="1" height="1"/><rect x="394" y="161" width="1" height="1"/><rect x="320" y="178" width="1" height="1"/><rect x="319" y="160" width="1" height="1"/><rect x="391" y="180" width="1" height="1"/><rect x="408" y="168" width="1" height="1"/><rect x="431" y="148" width="1" height="1"/><rect x="296" y="146" width="1" height="1"/><rect x="460" y="153" width="1" height="1"/><rect x="393" y="154" width="1" height="1"/><rect x="307" y="165" width="1" height="1"/><rect x="269" y="143" width="1" height="1"/><rect x="451" y="156" width="1" height="1"/><rect x="275" y="149" width="1" height="1"/><rect x="432" y="161" width="1" height="1"/><rect x="400" y="172" width="1" height="1"/><rect x="415" y="149" width="1" height="1"/><rect x="284" y="144" width="1" height="1"/><rect x="336" y="179" width="1" height="1"/><rect x="325" y="167" width="1" height="1"/><rect x="465" y="141" width="1" height="1"/><rect x="410" y="153" width="1" height="1"/><rect x="400" y="182" width="1" height="1"/><rect x="334" y="155" width="1" height="1"/><rect x="454" y="157" width="1" height="1"/><rect x="278" y="157" width="1" height="1"/><rect x="418" y="151" width="1" height="1"/><rect x="419" y="168" width="1" height="1"/><rect x="405" y="149" width="1" height="1"/><rect x="281" y="147" width="1" height="1"/><rect x="334" y="162" width="1" height="1"/><rect x="327" y="179" width="1" height="1"/><rect x="305" y="161" width="1" height="1"/><rect x="411" y="149" width="1" height="1"/><rect x="317" y="175" width="1" height="1"/><rect x="298" y="159" width="1" height="1"/></g>
 <path d="M482.0,136.0 C478.0,141.7 474.8,148.0 470.0,153.0 C464.1,159.1 456.9,164.0 450.0,169.0 C446.9,171.3 443.5,173.3 440.0,175.0 C433.5,178.3 426.8,181.4 420.0,184.0 C412.8,186.7 405.4,189.0 398.0,191.0 C392.1,192.6 386.1,193.7 380.0,194.5 C375.0,195.2 370.0,195.8 365.0,195.5 C357.3,195.1 349.6,194.1 342.0,192.5 C334.5,190.9 327.3,188.4 320.0,186.0 C313.2,183.7 306.4,181.6 300.0,178.5 C293.1,175.2 286.2,171.6 280.0,167.0 C272.8,161.7 266.2,155.4 260.0,149.0 C255.2,144.1 251.3,138.3 247.0,133.0" fill="none" stroke="#a00a22" stroke-width="16" filter="url(#bl1)" opacity=".95"/>
 <!-- zipper placket -->
 <path d="M336.5,153 L352,145 L356,152 L357,196 L346,194 L347,178 Z" fill="#d7203e"/>
 <path d="M384,152 L370,143 L366,152 L365,196 L376,195 L375,178 Z" fill="#d7203e"/>
 <path d="M336.5,153 L347,178 L346,194" fill="none" stroke="#ac0e27" stroke-width="1.6"/>
 <path d="M384,152 L375,178 L376,195" fill="none" stroke="#ac0e27" stroke-width="1.6"/>
 <path d="M351,160 L351,190 M371,160 L371,190" fill="none" stroke="#c0142f" stroke-width="1.5" opacity=".8"/>
 <rect x="356" y="150" width="9" height="46" fill="#a90f28"/>
 <path d="M358.5,165 V194 M362.5,165 V194" stroke="#d2566a" stroke-width="1" stroke-dasharray="1 2" opacity=".8" fill="none"/>
 <rect x="355.5" y="149.5" width="9" height="15.5" rx="2" fill="#cf838b"/>
 <path d="M358,152 v11 M361.5,152 v11" stroke="#e9c3c4" stroke-width="1" stroke-dasharray="2 1" fill="none"/>
 <path d="M367,149.5 l5,-2 l2,2.5 l-3,2.5 l-4,.5 z" fill="#f1dcda"/>
 <path d="M340,150 l3,-1 M344,154 l2,0" stroke="#efc9c8" stroke-width="1"/>
</g>
<!-- front neckline shadow is inside collar; stitch below -->
<g clip-path="url(#cs)">
 <path d="M470.0,162.0 C463.3,167.3 456.9,173.0 450.0,178.0 C446.9,180.3 443.5,182.3 440.0,184.0 C433.5,187.3 426.8,190.4 420.0,193.0 C412.8,195.7 405.4,198.0 398.0,200.0 C392.1,201.6 386.1,202.7 380.0,203.5 C375.0,204.2 370.0,204.8 365.0,204.5 C357.3,204.1 349.6,203.1 342.0,201.5 C334.5,199.9 327.3,197.4 320.0,195.0 C313.2,192.7 306.4,190.6 300.0,187.5 C293.1,184.2 286.2,180.6 280.0,176.0 C272.8,170.7 266.7,164.0 260.0,158.0" fill="none" stroke="#c3132e" stroke-width="1.2" opacity=".5"/>
</g>
</svg>
<div id="panel"></div>
<div id="ov">
 <!-- title bar & tabs -->
 <div class="bg" style="left:644px;top:61px;width:353px;height:18px;background:#404040;border-radius:4px 4px 0 0"></div>
 <div class="bg" style="left:644px;top:79px;width:353px;height:43px;background:#424242;border-top:1px solid #3b3535"></div>
 <div class="bg" style="left:644px;top:79px;width:71px;height:43px;background:#535353"></div>
 <div class="bg tab" style="left:715px;top:79px;width:90px;height:43px"></div>
 <div class="bg tab" style="left:804px;top:79px;width:67px;height:43px"></div>
 <div class="bg" style="left:715px;top:121px;width:282px;height:1px;background:#3b3535"></div>
 <div class="t" style="left:659px;top:90px;font-weight:bold;color:#fff;letter-spacing:-.8px">Layers</div>
 <div class="t dim" style="left:729px;top:90px">Channels</div>
 <div class="t dim" style="left:819px;top:90px">Paths</div>
 <!-- collapse / close / menu -->
 <svg style="left:952px;top:67px" width="12" height="9" viewBox="0 0 12 9"><path d="M4.5,1 L1.5,4.5 L4.5,8 M10.5,1 L7.5,4.5 L10.5,8" fill="none" stroke="#dcdcdc" stroke-width="1.4"/></svg>
 <svg style="left:979.6px;top:67px" width="10" height="9" viewBox="0 0 10 9"><path d="M1,0.5 L9,8.5 M9,0.5 L1,8.5" fill="none" stroke="#dcdcdc" stroke-width="2"/></svg>
 <svg style="left:974px;top:96px" width="15" height="11" viewBox="0 0 15 11"><path d="M0,1 H15 M0,4 H15 M0,7 H15 M0,10 H15" stroke="#d8d8d8" stroke-width="2"/></svg>

 <!-- kind row -->
 <div class="box" style="left:649px;top:136px;width:131px;height:28px"></div>
 <svg style="left:661px;top:143px" width="18" height="15" viewBox="0 0 18 15"><circle cx="6.5" cy="6" r="4.6" fill="none" stroke="#dcdcdc" stroke-width="1.8"/><path d="M10,9.5 L15.5,14" stroke="#dcdcdc" stroke-width="2.6" stroke-linecap="round"/></svg>
 <div class="t" style="left:683px;top:141px;letter-spacing:-.4px">Kind</div>
 <svg style="left:764px;top:148px" width="10" height="7" viewBox="0 0 10 7"><path d="M0.5,1 L5,5.5 L9.5,1" fill="none" stroke="#cfcfcf" stroke-width="1"/></svg>
 <svg style="left:798px;top:141px" width="18" height="16" viewBox="0 0 18 16" ><rect x=".7" y=".7" width="16.6" height="14.6" fill="none" stroke="#dcdada" stroke-width="1.4"/><path d="M3,12.6 L6.3,6.4 L9.3,10.5 L12.3,6.4 L15.4,12.6 Z" fill="#dcdada"/></svg><svg style="left:834px;top:140px" width="17" height="17" viewBox="0 0 17 17" ><circle cx="8.7" cy="8.5" r="7.6" fill="none" stroke="#dcdada" stroke-width="1.2"/><path d="M3.3,13.9 A7.6,7.6 0 0 0 14.1,3.1 Z" fill="#dcdada"/></svg><svg style="left:871px;top:141px" width="15" height="16" viewBox="0 0 15 16" ><path d="M0,0 H15 V4.6 H13 L12.4,2.6 H9.1 V13.4 L11.6,14 V16 H3.4 V14 L5.9,13.4 V2.6 H2.6 L2,4.6 H0 Z" fill="#dcdada"/></svg><svg style="left:906px;top:140px" width="18" height="18" viewBox="0 0 18 18" ><rect x="2.7" y="2.7" width="12.6" height="12.6" fill="none" stroke="#dcdada" stroke-width="1.6"/><circle cx="2.7" cy="2.7" r="1.9" fill="#535353" stroke="#dcdada" stroke-width="1.3"/><circle cx="2.7" cy="15.3" r="1.9" fill="#535353" stroke="#dcdada" stroke-width="1.3"/><circle cx="15.3" cy="2.7" r="1.9" fill="#535353" stroke="#dcdada" stroke-width="1.3"/><circle cx="15.3" cy="15.3" r="1.9" fill="#535353" stroke="#dcdada" stroke-width="1.3"/></svg><svg style="left:944px;top:140px" width="16" height="18" viewBox="0 0 16 18" ><path d="M4.6,9 V.8 H11.5 L15.3,4.6 V16 H9.5" fill="#474747" stroke="#dcdada" stroke-width="1.4"/><path d="M11,.8 V5 H15.3" fill="#dcdada" stroke="#dcdada" stroke-width="1"/><rect x="0" y="9" width="9" height="9" fill="#dcdada"/></svg><svg style="left:978px;top:136px" width="14" height="27" viewBox="0 0 14 27" ><rect x=".5" y=".5" width="13" height="26" rx="6.5" fill="#454545" stroke="#636363" stroke-width="1"/><circle cx="6.8" cy="6.6" r="6.2" fill="#dcdada"/></svg>
 <div class="bg" style="left:644px;top:168px;width:353px;height:3px;background:#494949"></div>

 <!-- blend row -->
 <div class="box" style="left:649px;top:178px;width:194px;height:28px"></div>
 <div class="t" style="left:662px;top:183px">Normal</div>
 <svg style="left:828px;top:190px" width="10" height="7" viewBox="0 0 10 7"><path d="M0.5,1 L5,5.5 L9.5,1" fill="none" stroke="#cfcfcf" stroke-width="1"/></svg>
 <div class="t" style="left:853px;top:183px">Opacity:</div>
 <div class="box" style="left:914px;top:180px;width:76px;height:23px"></div>
 <div class="bg" style="left:967px;top:181px;width:1px;height:22px;background:#626262"></div>
 <div class="t" style="left:921px;top:183px;color:#f0f0f0">100%</div>
 <svg style="left:974px;top:189px" width="10" height="7" viewBox="0 0 10 7"><path d="M0.5,1 L5,5.5 L9.5,1" fill="none" stroke="#cfcfcf" stroke-width="1"/></svg>
 <div class="bg" style="left:644px;top:210px;width:353px;height:3px;background:#494949"></div>

 <!-- lock row -->
 <div class="t" style="left:653px;top:224px">Lock:</div>
 <svg style="left:703px;top:225px" width="16" height="16" viewBox="0 0 16 16" ><rect width="16" height="16" fill="#dcdada"/><g fill="#4e4e4e"><rect x="1.2" y="1.2" width="4.4" height="4.4"/><rect x="10.4" y="1.2" width="4.4" height="4.4"/><rect x="5.8" y="5.8" width="4.4" height="4.4"/><rect x="1.2" y="10.4" width="4.4" height="4.4"/><rect x="10.4" y="10.4" width="4.4" height="4.4"/></g></svg><svg style="left:735px;top:223px" width="20" height="21" viewBox="0 0 20 21" ><path d="M19.4,.4 C20.2,1 19.8,2.2 19,3.4 L11.8,13.4 L8.6,11.2 L17.2,1.2 C18,.3 18.8,0 19.4,.4 Z" fill="#dcdada"/><path d="M8,11.6 L11,13.8 C12,16.5 9,19.5 5.5,20 C3.5,20.3 1.8,20 .6,21 C1.2,19.5 1.4,18.4 1.8,16.6 C2.5,13.5 5,11.2 8,11.6 Z" fill="#dcdada"/></svg><svg style="left:767px;top:224px" width="19" height="19" viewBox="0 0 19 19" ><path d="M9.3,0 L13.6,4.8 H10.4 V8.2 H13.8 V5 L18.6,9.3 L13.8,13.6 V10.4 H10.4 V13.8 H13.6 L9.3,18.6 L5,13.8 H8.2 V10.4 H4.8 V13.6 L0,9.3 L4.8,5 V8.2 H8.2 V4.8 H5 Z" fill="#dcdada"/></svg><svg style="left:799px;top:224px" width="22" height="18" viewBox="0 0 22 18" ><path d="M0,3.4 H12.5 L18,8.5 V13.8 M3.8,3.4 V13.8 M0,13.8 H22" fill="none" stroke="#dcdada" stroke-width="1.6"/><path d="M12.5,3.4 V8.5 H18 Z" fill="#dcdada" stroke="#dcdada" stroke-width="1"/><path d="M3.8,0 V1.6 M17.4,0 V1.6 M3.8,16 V17.6 M17.4,16 V17.6 M20,3.4 H22" stroke="#dcdada" stroke-width="1.4"/></svg><svg style="left:835px;top:224px" width="16" height="17" viewBox="0 0 16 17" ><path d="M3.6,6 V4.6 A4.4,4.4 0 0 1 12.4,4.6 V6" fill="none" stroke="#dcdada" stroke-width="1.9"/><rect x="0" y="5.6" width="16" height="11.2" rx="1" fill="#dcdada"/><circle cx="8" cy="10.9" r="1.8" fill="#4e4e4e"/></svg>
 <div class="t" style="left:887px;top:224px;letter-spacing:-.45px">Fill:</div>
 <div class="box" style="left:914px;top:221px;width:76px;height:24px"></div>
 <div class="bg" style="left:967px;top:222px;width:1px;height:23px;background:#626262"></div>
 <div class="t" style="left:921px;top:224px;color:#f0f0f0">100%</div>
 <svg style="left:974px;top:230px" width="10" height="7" viewBox="0 0 10 7"><path d="M0.5,1 L5,5.5 L9.5,1" fill="none" stroke="#cfcfcf" stroke-width="1"/></svg>

 <!-- layer list -->
 <div class="bg" style="left:644px;top:256px;width:353px;height:201px;background:#4d4d4d;border-top:1px solid #484848"></div>
 <div class="bg" style="left:973px;top:257px;width:24px;height:200px;background:#4a4a4a"></div>
 <div class="bg" style="left:644px;top:257px;width:45px;height:61px;background:#535353"></div>
 <div class="bg" style="left:689px;top:257px;width:284px;height:61px;background:#696969"></div>
 <div class="bg" style="left:644px;top:318px;width:329px;height:1px;background:#484848"></div>
 <svg style="left:658px;top:282px" width="20" height="13" viewBox="0 0 20 13" ><path d="M0,6.3 C3,1.6 6.5,0 9.8,0 C13.2,0 16.7,1.6 19.6,6.3 C16.7,10.8 13.2,12.4 9.8,12.4 C6.5,12.4 3,10.8 0,6.3 Z" fill="#dcdada"/><circle cx="10" cy="5.8" r="3.5" fill="#4e4e4e"/><circle cx="8.8" cy="4.6" r="1" fill="#dcdada"/></svg><svg style="left:695px;top:264px" width="34" height="48" viewBox="0 0 34 48" ><rect width="34" height="48" fill="#4c3a3a"/><rect x="1.5" y="1.5" width="31" height="45" fill="#e6e2e2"/>
 <rect x="24" y="1.5" width="8.5" height="45" fill="#8a7272"/>
 <g fill="#4a3535"><rect x="24" y="3" width="1" height="42"/><rect x="26" y="2" width="1" height="10"/><rect x="26" y="14" width="1" height="9"/><rect x="26" y="26" width="1" height="14"/><rect x="28" y="2" width="1" height="6"/><rect x="28" y="10" width="1" height="12"/><rect x="28" y="25" width="1" height="8"/><rect x="28" y="36" width="1" height="9"/><rect x="30" y="4" width="1" height="14"/><rect x="30" y="21" width="1" height="11"/><rect x="30" y="35" width="1" height="8"/><rect x="32" y="2" width="1" height="44"/></g>
 <g fill="#d0283f"><rect x="30" y="14" width="1" height="2"/><rect x="31" y="34" width="1" height="1"/><rect x="29" y="38" width="1" height="1"/><rect x="27" y="24" width="1" height="1"/></g>
 <rect x="2" y="2" width="5" height="2" fill="#222"/><rect x="6" y="2" width="1.5" height="6" fill="#222"/>
 <path d="M10,2 V6 C10,8 17,8 17,6 V2" fill="none" stroke="#1d1d1d" stroke-width="1.2"/>
 <path d="M9,8 L7,14 M16,8 L19,13" stroke="#3a2c2c" stroke-width=".8" fill="none"/>
 <rect x="15" y="10" width="1.2" height="1.2" fill="#d0283f"/>
 <path d="M6.5,14.5 L24.5,14 L25.5,44 L5.5,44 Z" fill="#d51e3b"/>
 <rect x="11" y="44" width="2" height="2.5" fill="#333"/></svg><svg style="left:735px;top:277px" width="11" height="22" viewBox="0 0 11 22" ><rect x="1" y="1" width="9" height="10" rx="4.4" fill="none" stroke="#dcdada" stroke-width="1.8"/><rect x="1" y="11" width="9" height="10" rx="4.4" fill="none" stroke="#dcdada" stroke-width="1.8"/><rect x="4.2" y="5.5" width="2.6" height="11" rx="1.2" fill="#dcdada" stroke="#696969" stroke-width="1"/></svg><svg style="left:749px;top:261px" width="40" height="54" viewBox="0 0 40 54" ><path d="M.5,19 V.5 H13.5 M26.5,.5 H39.5 V19 M39.5,35 V53.5 H26.5 M13.5,53.5 H.5 V35" fill="none" stroke="#f4f4f4" stroke-width="1"/>
 <rect x="3" y="3" width="34.5" height="48" fill="#4c3a3a"/><rect x="4.5" y="4.5" width="31.5" height="45" fill="#050505"/>
 <path d="M10,18.5 L11.5,17.2 L15,18 L19,17.2 L24,17.8 L28,17.2 L29,18.6 L27.8,24 L27.6,32 L28,40 L29,47 L9.2,47 L10.4,40 L11,32 L11,24 Z" fill="#fff"/></svg>
 <div class="t" style="left:801px;top:279px;color:#f0f0f0">Layer 0</div>

 <!-- bottom toolbar -->
 <div class="bg" style="left:644px;top:456px;width:353px;height:2px;background:#444"></div>
 <div class="bg" style="left:644px;top:458px;width:353px;height:36px;background:#535353"></div>
 <div class="bg" style="left:644px;top:494px;width:353px;height:2px;background:#3f3a3a"></div>
 <div class="bg" style="left:644px;top:496px;width:353px;height:10px;background:#525252"></div>
 <svg style="left:806px;top:497px" width="30" height="6" viewBox="0 0 30 6"><path d="M1,0V6M4,0V6M7,0V6M10,0V6M13,0V6M16,0V6M19,0V6M22,0V6M25,0V6M28,0V6" stroke="#444" stroke-width="1.4"/></svg>
 <svg style="left:692px;top:469px" width="22" height="12" viewBox="0 0 22 12" ><rect x="1" y="1" width="12" height="10" rx="5" fill="none" stroke="#8e8e8e" stroke-width="1.4" stroke-dasharray="2 1"/><rect x="9" y="1" width="12" height="10" rx="5" fill="none" stroke="#8e8e8e" stroke-width="1.4" stroke-dasharray="2 1"/><rect x="6" y="4.8" width="10" height="2.4" fill="#8e8e8e"/></svg><svg style="left:775px;top:467px" width="19" height="15" viewBox="0 0 19 15" ><rect width="19" height="14.6" rx="1.2" fill="#dcdada"/><circle cx="9.5" cy="7.3" r="4" fill="#4e4e4e"/></svg><svg style="left:817px;top:466px" width="17" height="17" viewBox="0 0 17 17" ><circle cx="8.5" cy="8.8" r="7.4" fill="none" stroke="#dcdada" stroke-width="1.2"/><path d="M3.3,14 A7.4,7.4 0 0 0 13.7,3.6 Z" fill="#dcdada"/></svg><svg style="left:834px;top:484px" width="7" height="4" viewBox="0 0 7 4" ><path d="M0,0 H6.4 L3.2,3.4 Z" fill="#f2f2f2"/></svg><svg style="left:752px;top:484px" width="7" height="4" viewBox="0 0 7 4" ><path d="M0,0 H6.4 L3.2,3.4 Z" fill="#f2f2f2"/></svg><svg style="left:855px;top:467px" width="19" height="16" viewBox="0 0 19 16" ><path d="M.6,2 C.6,1 1.2,.4 2.2,.4 H7.8 L9.6,2.6 H17 C18,2.6 18.6,3.2 18.6,4.2 V14.4 C18.6,15.4 18,16 17,16 H2.2 C1.2,16 .6,15.4 .6,14.4 Z" fill="#dcdada"/><path d="M.6,3.3 H9.5" stroke="#535353" stroke-width=".8"/></svg><svg style="left:898px;top:466px" width="16" height="18" viewBox="0 0 16 18" ><rect x=".8" y=".8" width="14.6" height="16.4" fill="none" stroke="#dcdada" stroke-width="1.5"/><path d="M8.1,5 V13 M4.1,9 H12.1" stroke="#dcdada" stroke-width="2"/></svg><svg style="left:938px;top:466px" width="16" height="18" viewBox="0 0 16 18" ><path d="M5.2,2.6 V.8 H10.8 V2.6" fill="none" stroke="#dcdada" stroke-width="1.4"/><path d="M0,3.4 H16" stroke="#dcdada" stroke-width="1.8"/><path d="M2,4 L2.8,17.3 H13.2 L14,4" fill="none" stroke="#dcdada" stroke-width="1.5"/><path d="M5.6,6.5 V15 M8,6.5 V15 M10.4,6.5 V15" stroke="#dcdada" stroke-width="1.5"/></svg><div class="t" style="left:735.5px;top:462px;font-style:italic;font-size:20px;-webkit-text-stroke:.3px #dcdada;line-height:24px;height:24px;font-family:'Liberation Serif',serif;color:#dcdada">fx</div>
</div>
</body></html>
